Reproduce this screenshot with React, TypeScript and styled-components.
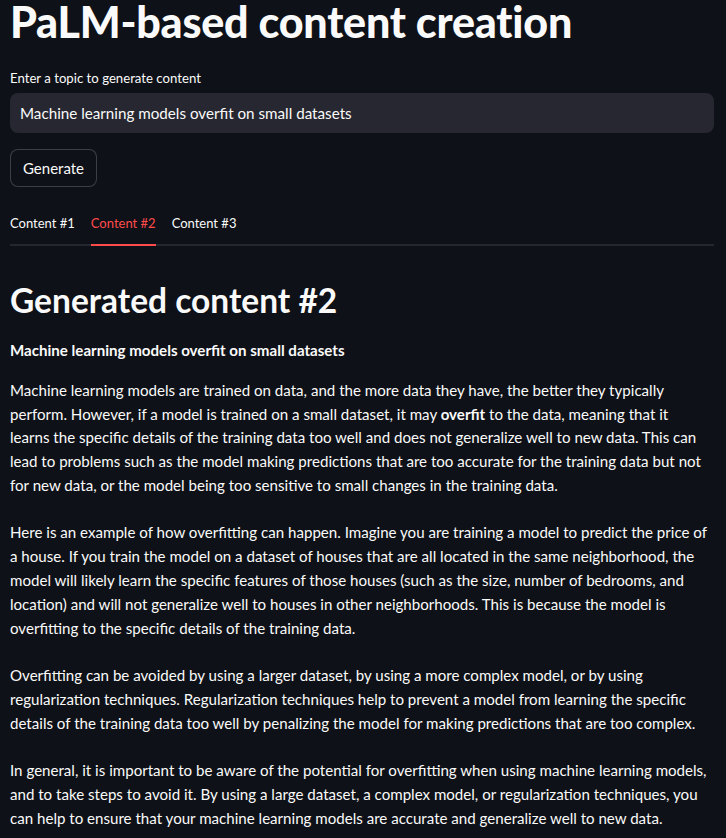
import React from "react";
import styled, { createGlobalStyle } from "styled-components";

const Global = createGlobalStyle`
  html, body { margin: 0; padding: 0; background: #0e1117; }
  body {
    color: #fafafa;
    font-family: "Lato", "Noto Sans", sans-serif;
    -webkit-font-smoothing: antialiased;
  }
  * { box-sizing: border-box; }
`;

const Page = styled.main`
  width: 726px;
  padding: 0 12px 0 10px;
  display: flex;
  flex-direction: column;
`;

const Title = styled.h1`
  margin: 0;
  font-size: 43px;
  font-weight: 900;
  line-height: 46px;
  margin-top: -1px;
  letter-spacing: -0.2px;
`;

const Field = styled.div`
  margin-top: 25px;
  display: flex;
  flex-direction: column;
  gap: 7px;
`;

const Label = styled.label`
  font-size: 13.2px;
  line-height: 16px;
`;

const Input = styled.input`
  height: 40px;
  width: 100%;
  border: none;
  outline: none;
  border-radius: 8px;
  background: #262730;
  color: #fafafa;
  padding: 0 10px;
  font-family: inherit;
  font-size: 15.2px;
`;

const Button = styled.button`
  align-self: flex-start;
  margin-top: 16px;
  height: 38px;
  padding: 0 12px;
  border-radius: 8px;
  border: 1px solid rgba(250, 250, 250, 0.2);
  background: #0e1117;
  color: #fafafa;
  font-family: inherit;
  font-size: 15px;
`;

const TabList = styled.div`
  margin-top: 25px;
  display: flex;
  gap: 16px;
  border-bottom: 2px solid #26272e;
`;

const Tab = styled.div<{ $active?: boolean }>`
  font-size: 13px;
  line-height: 16px;
  padding: 3px 0 13px;
  margin-bottom: -2px;
  color: ${(p) => (p.$active ? "#ff4b4b" : "#fafafa")};
  border-bottom: 2px solid ${(p) => (p.$active ? "#ff4b4b" : "transparent")};
`;

const Heading = styled.h2`
  margin: 34px 0 0;
  font-size: 33.5px;
  font-weight: 700;
  line-height: 40px;
`;

const Body = styled.div`
  margin-top: 19px;
  font-size: 15.1px;
  line-height: 23.8px;
  display: flex;
  flex-direction: column;
`;

const Lead = styled.p`
  margin: 0 0 16px;
  font-weight: 700;
`;

const P = styled.p`
  margin: 0 0 23.6px;
  white-space: nowrap;
`;

export default function App() {
  return (
    <Page>
      <Global />
      <Title>PaLM-based content creation</Title>
      <Field>
        <Label>Enter a topic to generate content</Label>
        <Input defaultValue="Machine learning models overfit on small datasets" />
      </Field>
      <Button>Generate</Button>
      <TabList>
        <Tab>Content #1</Tab>
        <Tab $active>Content #2</Tab>
        <Tab>Content #3</Tab>
      </TabList>
      <Heading>Generated content #2</Heading>
      <Body>
        <Lead>Machine learning models overfit on small datasets</Lead>
        <P>
          Machine learning models are trained on data, and the more data they have, the better they typically
          <br />
          perform. However, if a model is trained on a small dataset, it may <strong>overfit</strong> to the data,
          meaning that it
          <br />
          learns the specific details of the training data too well and does not generalize well to new data. This can
          <br />
          lead to problems such as the model making predictions that are too accurate for the training data but not
          <br />
          for new data, or the model being too sensitive to small changes in the training data.
        </P>
        <P>
          Here is an example of how overfitting can happen. Imagine you are training a model to predict the price of
          <br />
          a house. If you train the model on a dataset of houses that are all located in the same neighborhood, the
          <br />
          model will likely learn the specific features of those houses (such as the size, number of bedrooms, and
          <br />
          location) and will not generalize well to houses in other neighborhoods. This is because the model is
          <br />
          overfitting to the specific details of the training data.
        </P>
        <P>
          Overfitting can be avoided by using a larger dataset, by using a more complex model, or by using
          <br />
          regularization techniques. Regularization techniques help to prevent a model from learning the specific
          <br />
          details of the training data too well by penalizing the model for making predictions that are too complex.
        </P>
        <P>
          In general, it is important to be aware of the potential for overfitting when using machine learning models,
          <br />
          and to take steps to avoid it. By using a large dataset, a complex model, or regularization techniques, you
          <br />
          can help to ensure that your machine learning models are accurate and generalize well to new data.
        </P>
      </Body>
    </Page>
  );
}
